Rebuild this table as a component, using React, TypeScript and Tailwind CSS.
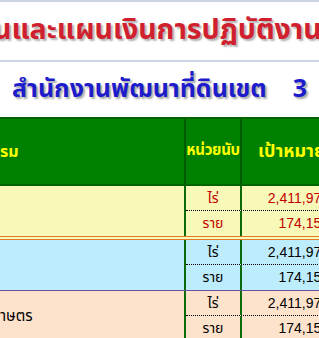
const rows = [
  {
    bg: "bg-[#f8f8b8]",
    text: "text-[#c00000]",
    label: "",
    items: [
      { unit: "ไร่", value: "2,411,975" },
      { unit: "ราย", value: "174,150" },
    ],
  },
  {
    bg: "bg-[#bdecfc]",
    text: "text-black",
    label: "",
    items: [
      { unit: "ไร่", value: "2,411,975" },
      { unit: "ราย", value: "174,150" },
    ],
  },
  {
    bg: "bg-[#fde3cc]",
    text: "text-black",
    label: "าษตร",
    items: [
      { unit: "ไร่", value: "2,411,975" },
      { unit: "ราย", value: "174,150" },
    ],
  },
];

const thai = "font-['Tahoma','Noto_Sans_Thai','Noto_Sans',sans-serif]";

const App = () => {
  return (
    <div className={`w-[319px] h-[338px] overflow-hidden bg-white ${thai}`}>
      <div className="h-[2px] bg-[#cbd5e6]" />

      <div className="h-[58px] flex items-center whitespace-nowrap -ml-[7px]">
        <span className="text-[28.5px] font-bold text-[#d01f2f] [text-shadow:2px_2px_2px_#b0b0b0] leading-none">
          นและแผนเงินการปฏิบัติงาน&nbsp;&nbsp;ประจำปี
        </span>
      </div>

      <div className="h-[2px] bg-[#cbd5e6]" />

      <div className="h-[55px] flex items-center whitespace-nowrap pl-[12px]">
        <span className="text-[25px] font-bold text-[#1c1ccc] [text-shadow:2px_2px_2px_#a8a8a8] leading-none">
          สำนักงานพัฒนาที่ดินเขต&nbsp;&nbsp;&nbsp;&nbsp;3
        </span>
      </div>

      <div className="w-[336px]">
        <div className="flex h-[69px] bg-[#008000] border-t-2 border-b-2 border-[#006400] text-[#ffff00] font-bold">
          <div className="w-[186px] border-r-2 border-[#005c00] flex items-center text-[16px]">
            รม
          </div>
          <div className="w-[56px] border-r-2 border-[#005c00] flex items-center justify-center text-[15px] tracking-[-0.3px]">
            หน่วยนับ
          </div>
          <div className="flex-1 flex items-center pl-[16px] text-[18px]">
            เป้าหมาย
          </div>
        </div>

        {rows.map((row, i) => (
          <div key={i}>
            {i === 1 && (
              <div className="h-[4px] bg-[#f8f8b8] border-t border-b border-[#e07a2c]" />
            )}
            {i === 2 && <div className="h-[1px] bg-[#6a4ea0]" />}
            <div className={`flex ${row.bg} ${row.text}`}>
              <div className="w-[186px] border-r-2 border-[#0b6b0b] flex items-center text-[15px] pt-[2px]">
                {row.label}
              </div>
              <div className="flex-1 flex flex-col">
                {row.items.map((it, j) => (
                  <div
                    key={j}
                    className={`flex h-[25px] ${j === 0 ? "border-b border-dotted border-black" : ""}`}
                  >
                    <div className="w-[56px] border-r-2 border-[#0b6b0b] flex items-center justify-center text-[14px]">
                      {it.unit}
                    </div>
                    <div className="flex-1 flex items-center justify-end pr-[7px] text-[14px] font-['Liberation_Sans',sans-serif]">
                      {it.value}
                    </div>
                  </div>
                ))}
              </div>
            </div>
          </div>
        ))}
      </div>
    </div>
  );
};

export default App;
